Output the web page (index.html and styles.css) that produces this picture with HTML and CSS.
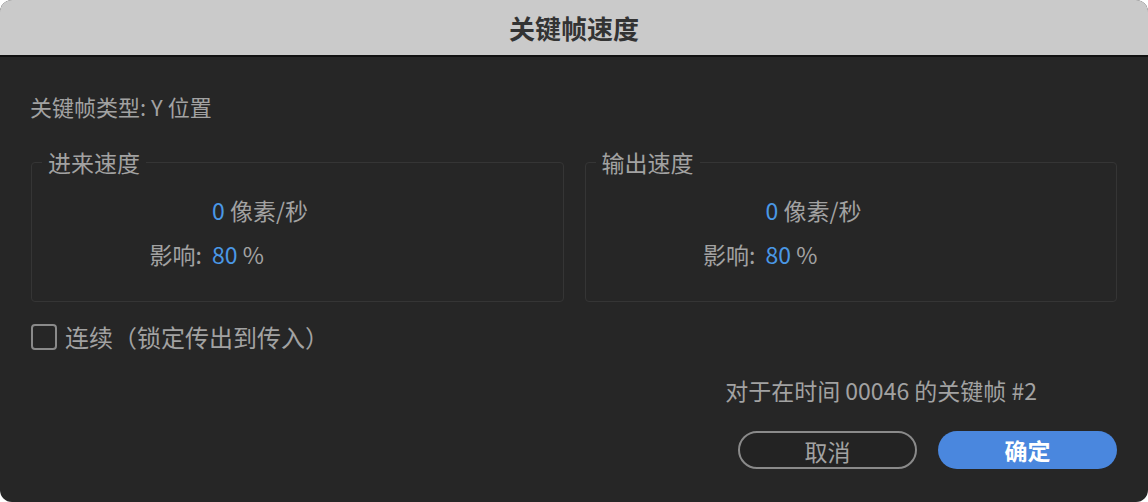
FILE: index.html
```html
<!DOCTYPE html>
<html lang="zh-CN">
<head>
  <meta charset="UTF-8" />
  <title>关键帧速度</title>
  <link rel="stylesheet" href="styles.css">
</head>
<body>
  <div class="dialog">
    <div class="titlebar">关键帧速度</div>
    <div class="inhalt">
      <div class="typ">关键帧类型: Y 位置</div>
      <div class="gruppen">
        <fieldset class="gruppe">
          <legend>进来速度</legend>
          <div class="werte">
            <span></span>
            <span><span class="zahl">0</span> 像素/秒</span>
            <span class="label">影响:</span>
            <span><span class="zahl">80</span> %</span>
          </div>
        </fieldset>
        <fieldset class="gruppe">
          <legend>输出速度</legend>
          <div class="werte">
            <span></span>
            <span><span class="zahl">0</span> 像素/秒</span>
            <span class="label">影响:</span>
            <span><span class="zahl">80</span> %</span>
          </div>
        </fieldset>
      </div>
      <label class="check">
        <span class="box"></span>
        连续（锁定传出到传入）
      </label>
      <div class="info">对于在时间 00046 的关键帧 #2</div>
      <div class="knoepfe">
        <button class="abbrechen">取消</button>
        <button class="ok">确定</button>
      </div>
    </div>
  </div>
</body>
</html>
```

FILE: styles.css
```css
body {
  margin: 0;
  background: #fff;
  font-family: "Noto Sans CJK SC", "Noto Sans", sans-serif;
}
.dialog {
  width: 1148px;
  height: 502px;
  border-radius: 12px;
  overflow: hidden;
  background: #262626;
  color: #a2a2a2;
}
.titlebar {
  height: 55px;
  line-height: 55px;
  background: #cacaca;
  border-bottom: 2px solid #111;
  text-align: center;
  font-size: 26px;
  font-weight: bold;
  color: #333;
}
.inhalt {
  padding: 0 31px;
}
.typ {
  margin-top: 37px;
  margin-left: -1px;
  font-size: 22px;
  line-height: 24px;
}
.gruppen {
  display: grid;
  grid-template-columns: 1fr 1fr;
  gap: 21px;
  margin-top: 32px;
}
.gruppe {
  margin: 0;
  min-width: 0;
  padding: 22px 0 33px;
  border: 1px solid #353535;
  border-radius: 4px;
}
.gruppe legend {
  margin-left: 10px;
  padding: 0 6px;
  font-size: 23px;
  line-height: 24px;
}
.werte {
  display: grid;
  grid-template-columns: 170px auto;
  column-gap: 10px;
  row-gap: 16px;
  font-size: 23px;
  line-height: 28px;
}
.label {
  text-align: right;
}
.zahl {
  color: #4a98e6;
}
.check {
  display: flex;
  align-items: center;
  gap: 8px;
  margin-top: 21px;
  font-size: 24px;
  line-height: 28px;
}
.box {
  width: 22px;
  height: 22px;
  border: 2px solid #8a8a8a;
  border-radius: 4px;
}
.info {
  margin-top: 26px;
  margin-right: 80px;
  text-align: right;
  font-size: 23px;
  line-height: 26px;
}
.knoepfe {
  display: flex;
  justify-content: flex-end;
  gap: 21px;
  margin-top: 28px;
}
.knoepfe button {
  width: 179px;
  height: 38px;
  border-radius: 19px;
  font-family: inherit;
  font-size: 23px;
}
.abbrechen {
  background: #232323;
  border: 2px solid #8a8a8a;
  color: #a2a2a2;
}
.ok {
  background: #4a87de;
  border: none;
  color: #fff;
  font-weight: bold;
}
```
